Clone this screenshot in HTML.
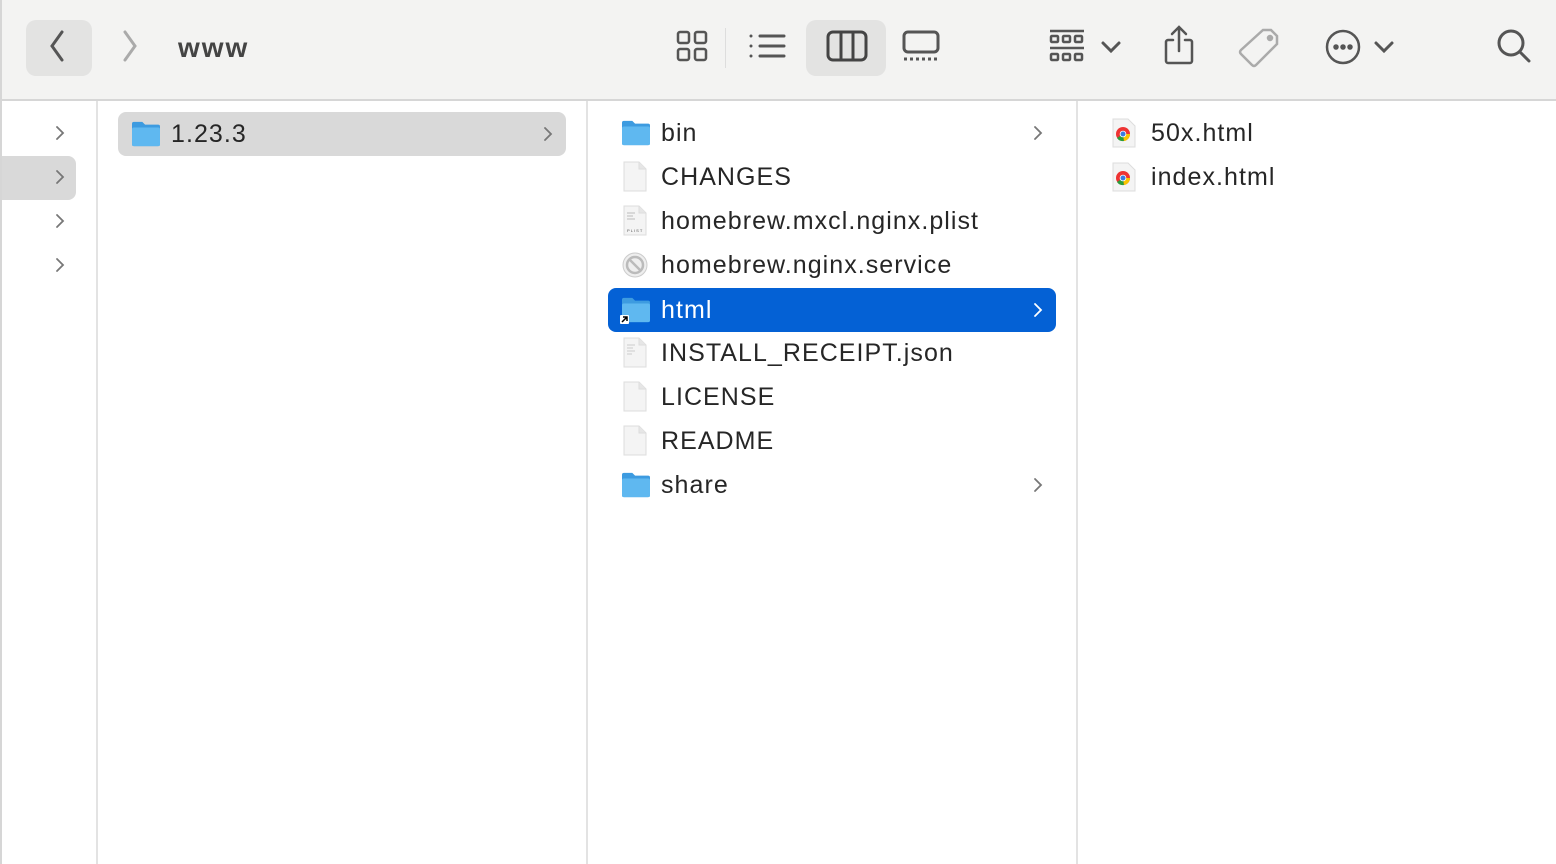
<!DOCTYPE html>
<html><head><style>
*{margin:0;padding:0;box-sizing:border-box}
body{width:1556px;height:864px;overflow:hidden;background:#fff;font-family:"Liberation Sans",sans-serif;position:relative}
.tb{position:absolute;left:0;top:0;width:1556px;height:101px;background:#f3f3f2;border-bottom:2px solid #d6d6d6;border-left:2px solid #d6d6d6}
.ab{position:absolute}
.col{position:absolute;top:101px;bottom:0;border-left:2px solid #e3e3e3}
.row{position:absolute;height:44px;display:flex;align-items:center;font-size:25px;letter-spacing:1.05px;color:#262626}
.row .ic{position:absolute;left:12px;top:8px}
.row .t{position:absolute;left:53px;top:8px;line-height:28px}
.chev{position:absolute;right:12px;top:14px}
</style></head><body>
<div class="tb">
 <div class="ab" style="left:24px;top:20px;width:66px;height:56px;background:#e3e3e2;border-radius:10px"></div>
 <svg class="ab" style="left:46px;top:30px" width="20" height="32"><path d="M14 2L4 16l10 14" stroke="#555" stroke-width="3" fill="none" stroke-linecap="round"/></svg>
 <svg class="ab" style="left:118px;top:30px" width="20" height="32"><path d="M5 2l10 14L5 30" stroke="#aaa" stroke-width="3" fill="none" stroke-linecap="round"/></svg>
 <div class="ab" style="left:176px;top:32px;font-size:28px;font-weight:bold;color:#444;letter-spacing:2px">www</div>
 <svg class="ab" style="left:674px;top:30px" width="34" height="34" fill="none" stroke="#555" stroke-width="2.5"><rect x="2" y="2" width="11" height="11" rx="2"/><rect x="19" y="2" width="11" height="11" rx="2"/><rect x="2" y="19" width="11" height="11" rx="2"/><rect x="19" y="19" width="11" height="11" rx="2"/></svg>
 <div class="ab" style="left:723px;top:28px;width:1px;height:40px;background:#ddd"></div>
 <svg class="ab" style="left:746px;top:32px" width="38" height="28" stroke="#555" stroke-width="3" stroke-linecap="round"><path d="M12 4h24M12 14h24M12 24h24M3 4h0M3 14h0M3 24h0"/></svg>
 <div class="ab" style="left:804px;top:20px;width:80px;height:56px;background:#e3e3e2;border-radius:10px"></div>
 <svg class="ab" style="left:824px;top:30px" width="42" height="32" fill="none" stroke="#444" stroke-width="3"><rect x="2" y="2" width="38" height="28" rx="5"/><path d="M15 2v28M27 2v28"/></svg>
 <svg class="ab" style="left:898px;top:30px" width="42" height="34" fill="none" stroke="#555" stroke-width="3"><rect x="4" y="2" width="34" height="20" rx="4"/><path d="M4 29h34" stroke-dasharray="3 3"/></svg>
 <svg class="ab" style="left:1046px;top:28px" width="40" height="38" fill="none" stroke="#555" stroke-width="2.5"><path d="M2 3h34M2 20h34"/><rect x="3" y="8" width="7" height="6" rx="1"/><rect x="15" y="8" width="7" height="6" rx="1"/><rect x="27" y="8" width="7" height="6" rx="1"/><rect x="3" y="26" width="7" height="6" rx="1"/><rect x="15" y="26" width="7" height="6" rx="1"/><rect x="27" y="26" width="7" height="6" rx="1"/></svg>
 <svg class="ab" style="left:1098px;top:40px" width="22" height="14"><path d="M3 3l8 8 8-8" stroke="#555" stroke-width="3" fill="none" stroke-linecap="round"/></svg>
 <svg class="ab" style="left:1160px;top:24px" width="34" height="42" fill="none" stroke="#555" stroke-width="2.5" stroke-linecap="round"><path d="M11 16H6a2 2 0 0 0-2 2v19a2 2 0 0 0 2 2h22a2 2 0 0 0 2-2V18a2 2 0 0 0-2-2h-5M17 27V3M10 10l7-7 7 7"/></svg>
 <svg class="ab" style="left:1234px;top:26px" width="46" height="44" fill="none" stroke="#aaa" stroke-width="2.5"><path d="M27 4h8l6 6v8L20 39q-2 2-4 0L5 28q-2-2 0-4z"/><circle cx="34" cy="12" r="2" fill="#aaa"/></svg>
 <svg class="ab" style="left:1322px;top:28px" width="38" height="38" fill="none" stroke="#555" stroke-width="2.5"><circle cx="19" cy="19" r="16"/><circle cx="12" cy="19" r="1.5" fill="#555"/><circle cx="19" cy="19" r="1.5" fill="#555"/><circle cx="26" cy="19" r="1.5" fill="#555"/></svg>
 <svg class="ab" style="left:1371px;top:40px" width="22" height="14"><path d="M3 3l8 8 8-8" stroke="#555" stroke-width="3" fill="none" stroke-linecap="round"/></svg>
 <svg class="ab" style="left:1494px;top:28px" width="38" height="38" fill="none" stroke="#555" stroke-width="3" stroke-linecap="round"><circle cx="15" cy="15" r="12"/><path d="M24 24l9 9"/></svg>
</div>

<svg width="0" height="0" style="position:absolute"><defs>
<symbol id="fold" viewBox="0 0 32 30"><path d="M1 4a2 2 0 0 1 2-2h9l3 3h14a2 2 0 0 1 2 2v19a2 2 0 0 1-2 2H3a2 2 0 0 1-2-2z" fill="#3d9be0"/><rect x="1" y="8" width="30" height="20" rx="2" fill="#5fb8f0"/></symbol>
<symbol id="doc" viewBox="0 0 30 32"><path d="M4 1h15l7 7v22H4z" fill="#f4f4f4" stroke="#ddd"/><path d="M19 1v7h7" fill="#e6e6e6" stroke="#ddd"/></symbol>
<symbol id="chev" viewBox="0 0 12 16"><path d="M3 2l6 6-6 6" stroke="#777" stroke-width="1.8" fill="none" stroke-linecap="round"/></symbol>
<symbol id="chr" viewBox="0 0 28 30"><path d="M3 1h15l7 7v21H3z" fill="#f4f4f4" stroke="#ddd"/><circle cx="13" cy="16" r="7" fill="#e33"/><path d="M13 16L7 20a7 7 0 0 0 7 3z" fill="#2a9d3c"/><path d="M13 16l7 0a7 7 0 0 1-6 7z" fill="#f8c400"/><circle cx="13" cy="16" r="3.3" fill="#fff"/><circle cx="13" cy="16" r="2.5" fill="#3a7be0"/></symbol>
</defs></svg>

<div class="col" style="left:0;width:97px;border-left:2px solid #d6d6d6">
 <div class="ab" style="left:0;top:55px;width:74px;height:44px;background:#d9d9d9;border-radius:0 8px 8px 0"></div>
 <svg class="ab" style="left:52px;top:24px" width="12" height="16"><use href="#chev"/></svg>
 <svg class="ab" style="left:52px;top:68px" width="12" height="16"><use href="#chev"/></svg>
 <svg class="ab" style="left:52px;top:112px" width="12" height="16"><use href="#chev"/></svg>
 <svg class="ab" style="left:52px;top:156px" width="12" height="16"><use href="#chev"/></svg>
</div>

<div class="col" style="left:96px;width:491px">
 <div class="row" style="left:20px;top:11px;width:448px;background:#d9d9d9;border-radius:8px">
  <svg class="ic" width="32" height="28"><use href="#fold"/></svg><span class="t">1.23.3</span>
  <svg class="chev" width="12" height="16"><use href="#chev"/></svg></div>
</div>

<div class="col" style="left:586px;width:491px">
 <div class="row" style="left:20px;top:10px;width:448px"><svg class="ic" width="32" height="28"><use href="#fold"/></svg><span class="t">bin</span><svg class="chev" width="12" height="16"><use href="#chev"/></svg></div>
 <div class="row" style="left:20px;top:54px;width:448px"><svg class="ic" width="30" height="32" style="top:6px"><use href="#doc"/></svg><span class="t">CHANGES</span></div>
 <div class="row" style="left:20px;top:98px;width:448px"><svg class="ic" width="30" height="32" style="top:6px"><use href="#doc"/><text x="7" y="27" font-size="4" fill="#555" font-family="Liberation Sans">PLIST</text><path d="M7 8h8M7 11h6M7 14h8" stroke="#bbb"/></svg><span class="t">homebrew.mxcl.nginx.plist</span></div>
 <div class="row" style="left:20px;top:142px;width:448px"><svg class="ic" width="30" height="30" style="top:7px"><circle cx="15" cy="15" r="12" fill="#eee" stroke="#ccc" stroke-width="1"/><circle cx="15" cy="15" r="8" fill="none" stroke="#bbb" stroke-width="2.5"/><path d="M9 9l12 12" stroke="#bbb" stroke-width="2.5"/></svg><span class="t">homebrew.nginx.service</span></div>
 <div class="row" style="left:20px;top:187px;width:448px;background:#0461d5;border-radius:8px;color:#fff"><svg class="ic" width="32" height="28"><use href="#fold"/><rect x="0" y="19" width="9" height="9" fill="#fff" rx="1"/><path d="M2 26l5-5M3 21h4v4" stroke="#000" stroke-width="1.5" fill="none"/></svg><span class="t">html</span><svg class="chev" width="12" height="16"><path d="M3 2l6 6-6 6" stroke="#fff" stroke-width="1.8" fill="none" stroke-linecap="round"/></svg></div>
 <div class="row" style="left:20px;top:230px;width:448px"><svg class="ic" width="30" height="32" style="top:6px"><use href="#doc"/><path d="M7 8h8M7 11h6M7 14h8M7 17h5" stroke="#ccc"/></svg><span class="t">INSTALL_RECEIPT.json</span></div>
 <div class="row" style="left:20px;top:274px;width:448px"><svg class="ic" width="30" height="32" style="top:6px"><use href="#doc"/></svg><span class="t">LICENSE</span></div>
 <div class="row" style="left:20px;top:318px;width:448px"><svg class="ic" width="30" height="32" style="top:6px"><use href="#doc"/></svg><span class="t">README</span></div>
 <div class="row" style="left:20px;top:362px;width:448px"><svg class="ic" width="32" height="28"><use href="#fold"/></svg><span class="t">share</span><svg class="chev" width="12" height="16"><use href="#chev"/></svg></div>
</div>

<div class="col" style="left:1076px;width:480px">
 <div class="row" style="left:20px;top:10px;width:440px"><svg class="ic" width="28" height="30" style="top:7px"><use href="#chr"/></svg><span class="t">50x.html</span></div>
 <div class="row" style="left:20px;top:54px;width:440px"><svg class="ic" width="28" height="30" style="top:7px"><use href="#chr"/></svg><span class="t">index.html</span></div>
</div>
</body></html>
